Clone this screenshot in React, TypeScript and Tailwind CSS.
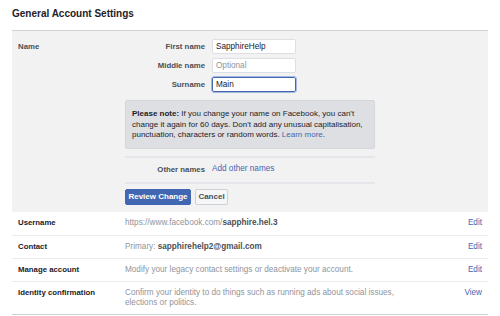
import React from "react";

interface SettingRow {
  label: string;
  value: React.ReactNode;
  action: string;
}

const ROWS: SettingRow[] = [
  {
    label: "Username",
    value: (
      <>
        https://www.facebook.com/<span className="font-bold text-[#4b4f56]">sapphire.hel.3</span>
      </>
    ),
    action: "Edit",
  },
  {
    label: "Contact",
    value: (
      <>
        Primary: <span className="font-bold text-[#4b4f56]">sapphirehelp2@gmail.com</span>
      </>
    ),
    action: "Edit",
  },
  {
    label: "Manage account",
    value: "Modify your legacy contact settings or deactivate your account.",
    action: "Edit",
  },
  {
    label: "Identity confirmation",
    value: "Confirm your identity to do things such as running ads about social issues, elections or politics.",
    action: "View",
  },
];

function NameField({
  label,
  value,
  placeholder,
  focused,
}: {
  label: string;
  value?: string;
  placeholder?: string;
  focused?: boolean;
}) {
  return (
    <div className="flex items-center">
      <span className="w-[200px] pr-[7px] text-right text-[7.8px] font-bold text-[#4b4f56]">{label}</span>
      <input
        defaultValue={value}
        placeholder={placeholder}
        className={
          focused
            ? "h-[15px] w-[84px] rounded-[2px] border border-[#4267b2] bg-white px-[3px] text-[8.2px] text-[#1d2129] outline outline-[1px] outline-[#a4b8e0] placeholder:text-[#90949c]"
            : "h-[15px] w-[84px] rounded-[2px] border border-[#dddfe2] bg-white px-[3px] text-[8.2px] text-[#1d2129] outline-none placeholder:text-[#90949c]"
        }
      />
    </div>
  );
}

export default function App() {
  return (
    <div className="h-[316px] w-[500px] bg-white px-[12px] font-['Liberation_Sans',Arial,sans-serif] text-[8.2px] text-[#1d2129]">
      <h1 className="h-[30px] pt-[8px] text-[10px] leading-[12px] font-bold text-[#1d2129]">General Account Settings</h1>

      <div className="border-t border-[#cfd1d5] bg-[#f2f2f2] pt-[8px] pb-[7px]">
        <div className="relative">
          <span className="absolute top-[2px] left-[6px] text-[7.8px] font-bold text-[#4b4f56]">Name</span>
          <div className="flex flex-col gap-[4px]">
            <NameField label="First name" value="SapphireHelp" />
            <NameField label="Middle name" placeholder="Optional" />
            <NameField label="Surname" value="Main" focused />
          </div>
        </div>

        <div className="ml-[113px] w-[250px]">
          <div className="mt-[8px] rounded-[2px] border border-[#d3d6db] bg-[#dddfe2] px-[6px] pt-[8px] pb-[7px] text-[8px] leading-[10.5px] text-[#1d2129]">
            <span className="font-bold">Please note:</span> If you change your name on Facebook, you can't
            change it again for 60 days. Don't add any unusual capitalisation, punctuation, characters or random
            words. <span className="text-[#4267b2]">Learn more</span>.
          </div>
          <div className="mt-[7px] border-t-2 border-[#e5e6e9]" />
          <div className="flex h-[24px] items-center">
            <span className="w-[87px] pr-[7px] text-right text-[7.8px] font-bold text-[#4b4f56]">Other names</span>
            <span className="text-[#4267b2]">Add other names</span>
          </div>
          <div className="border-t-2 border-[#e5e6e9]" />
          <div className="mt-[5px] flex gap-[4px]">
            <button className="h-[16px] w-[66px] rounded-[2px] border border-[#4267b2] bg-[#4267b2] text-[8px] font-bold text-white">
              Review Change
            </button>
            <button className="h-[16px] w-[33px] rounded-[2px] border border-[#ced0d4] bg-[#f5f6f7] text-[8px] font-bold text-[#4b4f56]">
              Cancel
            </button>
          </div>
        </div>
      </div>

      <div className="border-b border-[#cfd1d5]">
        {ROWS.map((row, i) => (
          <div
            key={row.label}
            className={
              i === 0
                ? "flex min-h-[23px] items-start px-[6px] py-[6px] leading-[10px]"
                : "flex min-h-[23px] items-start border-t border-[#e9ebee] px-[6px] py-[6px] leading-[10px]"
            }
          >
            <span className="w-[107px] shrink-0 text-[7.8px] font-bold text-[#1d2129]">{row.label}</span>
            <span className="w-[272px] text-[#90949c]">{row.value}</span>
            <span className="ml-auto text-[#4267b2]">{row.action}</span>
          </div>
        ))}
      </div>
    </div>
  );
}
